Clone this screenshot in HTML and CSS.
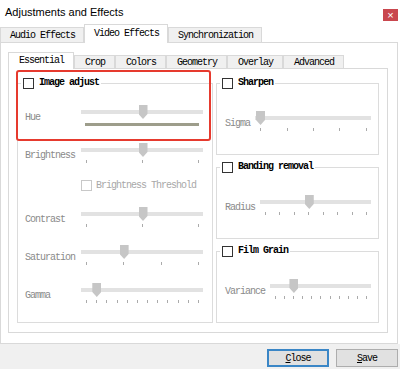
FILE: index.html
```html
<!DOCTYPE html>
<html lang="en">
<head>
  <meta charset="UTF-8" />
  <meta name="viewport" content="width=device-width, initial-scale=1.0"/>
  <title>Adjustments and Effects</title>
  <link rel="stylesheet" href="styles.css">
</head>
<body>
  <div class="window">
    <div class="titlebar">
      <span class="title">Adjustments and Effects</span>
      <span class="close-x">&times;</span>
    </div>

    <div class="tabs outer-tabs">
      <div class="tab">Audio Effects</div>
      <div class="tab active">Video Effects</div>
      <div class="tab">Synchronization</div>
    </div>

    <div class="pane outer-pane">
      <div class="tabs inner-tabs">
        <div class="tab active">Essential</div>
        <div class="tab">Crop</div>
        <div class="tab">Colors</div>
        <div class="tab">Geometry</div>
        <div class="tab">Overlay</div>
        <div class="tab">Advanced</div>
      </div>

      <div class="pane inner-pane">
        <!-- left: image adjust -->
        <div class="group left-group">
          <div class="group-title"><span class="check"></span>Image adjust</div>

          <div class="row">
            <span class="label">Hue</span>
            <div class="slider">
              <div class="track"></div>
              <div class="hue-bar"></div>
              <div class="rail"><span class="thumb" style="left: 50%"></span></div>
            </div>
          </div>

          <div class="row">
            <span class="label">Brightness</span>
            <div class="slider">
              <div class="track"></div>
              <div class="ticks"><i></i><i></i><i></i></div>
              <div class="rail"><span class="thumb" style="left: 50%"></span></div>
            </div>
          </div>

          <div class="row threshold-row">
            <span class="check disabled"></span>
            <span class="threshold-label">Brightness Threshold</span>
          </div>

          <div class="row">
            <span class="label">Contrast</span>
            <div class="slider">
              <div class="track"></div>
              <div class="ticks"><i></i><i></i><i></i></div>
              <div class="rail"><span class="thumb" style="left: 50%"></span></div>
            </div>
          </div>

          <div class="row">
            <span class="label">Saturation</span>
            <div class="slider">
              <div class="track"></div>
              <div class="ticks"><i></i><i></i><i></i><i></i></div>
              <div class="rail"><span class="thumb" style="left: 33.3%"></span></div>
            </div>
          </div>

          <div class="row">
            <span class="label">Gamma</span>
            <div class="slider">
              <div class="track"></div>
              <div class="ticks"><i></i><i></i><i></i><i></i><i></i><i></i><i></i><i></i><i></i><i></i><i></i><i></i></div>
              <div class="rail"><span class="thumb" style="left: 9.1%"></span></div>
            </div>
          </div>

          <div class="highlight"></div>
        </div>

        <!-- right column -->
        <div class="right-col">
          <div class="group small-group">
            <div class="group-title"><span class="check"></span>Sharpen</div>
            <div class="row">
              <span class="label">Sigma</span>
              <div class="slider">
                <div class="track"></div>
                <div class="ticks"><i></i><i></i><i></i><i></i><i></i></div>
                <div class="rail"><span class="thumb" style="left: 0%"></span></div>
              </div>
            </div>
          </div>

          <div class="group small-group">
            <div class="group-title"><span class="check"></span>Banding removal</div>
            <div class="row">
              <span class="label">Radius</span>
              <div class="slider">
                <div class="track"></div>
                <div class="ticks"><i></i><i></i><i></i><i></i><i></i><i></i><i></i><i></i></div>
                <div class="rail"><span class="thumb" style="left: 42.9%"></span></div>
              </div>
            </div>
          </div>

          <div class="group small-group">
            <div class="group-title"><span class="check"></span>Film Grain</div>
            <div class="row">
              <span class="label">Variance</span>
              <div class="slider">
                <div class="track"></div>
                <div class="ticks"><i></i><i></i><i></i><i></i><i></i><i></i><i></i><i></i><i></i><i></i><i></i></div>
                <div class="rail"><span class="thumb" style="left: 20%"></span></div>
              </div>
            </div>
          </div>
        </div>
      </div>
    </div>

    <div class="footer">
      <button class="btn btn-default"><u>C</u>lose</button>
      <button class="btn"><u>S</u>ave</button>
    </div>
  </div>
</body>
</html>
```

FILE: styles.css
```css
body {
  margin: 0;
  background: #fff;
  overflow: hidden;
}

.window {
  width: 400px;
  height: 369px;
  font-family: "Liberation Mono", monospace;
  font-size: 10px;
  letter-spacing: -1px;
  color: #000;
}

.titlebar {
  height: 24px;
  display: flex;
  justify-content: space-between;
  align-items: flex-start;
  padding: 0 2px 0 5px;
}

.title {
  font-family: "Liberation Sans", Arial, sans-serif;
  font-size: 11px;
  letter-spacing: 0;
  line-height: 16px;
  padding-top: 4px;
}

.close-x {
  width: 15px;
  height: 12px;
  margin-top: 9px;
  background: #c9474e;
  color: #fff;
  font-family: "Liberation Sans", Arial, sans-serif;
  font-size: 11px;
  letter-spacing: 0;
  line-height: 12px;
  text-align: center;
}

/* tabs */
.tabs {
  display: flex;
  align-items: flex-end;
}

.tab {
  position: relative;
  box-sizing: border-box;
  border: 1px solid #d9d9d9;
  border-bottom: none;
  background: #f0f0f0;
  white-space: nowrap;
}

.tab.active {
  background: #fff;
  z-index: 1;
  margin-bottom: -1px;
}

.outer-tabs {
  height: 18px;
}

.outer-tabs .tab {
  height: 15px;
  line-height: 14px;
  padding: 1px 8px 0 9px;
}

.outer-tabs .tab.active {
  height: 19px;
  line-height: 16px;
}

.inner-tabs {
  height: 16px;
}

.inner-tabs .tab {
  height: 13px;
  line-height: 13px;
  padding: 0 9px 0 10px;
}

.inner-tabs .tab.active {
  height: 17px;
  line-height: 15px;
}

/* panes */
.pane {
  border: 1px solid #d9d9d9;
  background: #fff;
}

.outer-pane {
  margin-right: 2px;
  padding: 9px 9px 10px 7px;
}

.inner-pane {
  display: flex;
  gap: 3px;
  padding: 14px 8px 9px 8px;
}

/* group boxes */
.group {
  position: relative;
  box-sizing: border-box;
  border: 1px solid #dcdcdc;
}

.group-title {
  position: absolute;
  top: -7px;
  left: 3px;
  display: flex;
  align-items: center;
  gap: 5px;
  height: 12px;
  padding: 0 2px;
  background: #fff;
  font-weight: bold;
  line-height: 12px;
}

.check {
  display: inline-block;
  box-sizing: border-box;
  width: 11px;
  height: 11px;
  border: 1px solid #333;
  background: #fff;
}

.check.disabled {
  border-color: #c8c8c8;
}

.left-group {
  width: 196px;
  height: 240px;
  padding: 21px 9px 0 7px;
  display: flex;
  flex-direction: column;
  gap: 17px;
}

.right-col {
  width: 163px;
  display: flex;
  flex-direction: column;
  gap: 12px;
}

.small-group {
  height: 72px;
  padding: 27px 7px 0 8px;
}

.small-group .row {
  gap: 5px;
}

.small-group .label {
  width: auto;
}

/* rows & sliders */
.row {
  display: flex;
  height: 21px;
}

.label {
  width: 56px;
  flex-shrink: 0;
  padding-top: 7px;
  line-height: 12px;
  color: #8a8a8a;
}

.slider {
  position: relative;
  flex: 1;
}

.track {
  height: 4px;
  margin-top: 5px;
  background: #e2e2e2;
}

.hue-bar {
  height: 3px;
  margin: 9px 4px 0 4px;
  background: #9d9d8b;
}

.ticks {
  display: flex;
  justify-content: space-between;
  margin: 8px 4px 0 5px;
}

.ticks i {
  width: 1px;
  height: 3px;
  background: #ababab;
}

.rail {
  position: absolute;
  top: 0;
  left: 5px;
  right: 4px;
  height: 14px;
}

.thumb {
  position: absolute;
  top: 0;
  width: 9px;
  height: 14px;
  margin-left: -4px;
  background: #c6c6c6;
  clip-path: polygon(0 0, 100% 0, 100% 64%, 50% 100%, 0 64%);
}

.threshold-row {
  height: 9px;
  align-items: center;
  gap: 4px;
  padding-left: 56px;
}

.threshold-label {
  color: #a8a8a8;
  line-height: 12px;
}

.highlight {
  position: absolute;
  left: -2px;
  top: -14px;
  width: 195px;
  height: 71px;
  box-sizing: border-box;
  border: 2px solid #e63a2e;
  border-radius: 3px;
  pointer-events: none;
}

/* footer buttons */
.footer {
  height: 25px;
  box-sizing: border-box;
  background: #f0f0f0;
  display: flex;
  justify-content: flex-end;
  gap: 7px;
  padding: 5px 2px 0 0;
}

.btn {
  width: 62px;
  height: 18px;
  box-sizing: border-box;
  padding: 0;
  background: #e1e1e1;
  border: 1px solid #adadad;
  font-family: "Liberation Mono", monospace;
  font-size: 10px;
  letter-spacing: -1px;
  color: #000;
}

.btn-default {
  border: 2px solid #3a86c6;
}
```
